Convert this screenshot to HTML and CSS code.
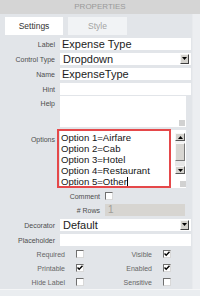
FILE: index.html
```html
<!DOCTYPE html>
<html>
<head>
<meta charset="utf-8">
<link rel="stylesheet" href="styles.css">
</head>
<body>
<div class="header">PROPERTIES</div>
<div class="content">
  <div class="main">
    <div class="tabs">
      <div class="tab active">Settings</div>
      <div class="tab">Style</div>
    </div>
    <div class="form">
      <div class="row r-first">
        <span class="lbl">Label</span>
        <div class="field">Expense Type</div>
      </div>
      <div class="row r-std">
        <span class="lbl">Control Type</span>
        <div class="field select"><span class="val">Dropdown</span><span class="ddbtn"><svg width="5" height="4" viewBox="0 0 5 4"><path d="M0 0H5L2.5 3Z" fill="#000"/></svg></span></div>
      </div>
      <div class="row r-std">
        <span class="lbl">Name</span>
        <div class="field">ExpenseType</div>
      </div>
      <div class="row r-std">
        <span class="lbl">Hint</span>
        <div class="field"></div>
      </div>
      <div class="row r-help">
        <span class="lbl lbl-top">Help</span>
        <div class="area help"><span class="grip"></span></div>
      </div>
      <div class="row r-options">
        <span class="lbl lbl-opt">Options</span>
        <div class="area options">
          <div class="opt-text">
            <div>Option 1=Airfare</div>
            <div>Option 2=Cab</div>
            <div>Option 3=Hotel</div>
            <div>Option 4=Restaurant</div>
            <div>Option 5=Other<span class="caret"></span></div>
          </div>
          <div class="sb-col">
            <div class="scrollbar">
              <div class="sb-btn"><svg width="5" height="3" viewBox="0 0 5 3"><path d="M0 3H5L2.5 0Z" fill="#000"/></svg></div>
              <div class="sb-thumb"></div>
              <div class="sb-track"></div>
              <div class="sb-btn"><svg width="5" height="3" viewBox="0 0 5 3"><path d="M0 0H5L2.5 3Z" fill="#000"/></svg></div>
            </div>
            <span class="grip grip-flow"></span>
          </div>
          <div class="highlight"></div>
        </div>
      </div>
      <div class="row2 r-comment">
        <span class="lbl">Comment</span>
        <span class="cb"></span>
      </div>
      <div class="row2 r-rows">
        <span class="lbl">&#35; Rows</span>
        <div class="field disabled">1</div>
      </div>
      <div class="row r-dec">
        <span class="lbl">Decorator</span>
        <div class="field select"><span class="val">Default</span><span class="ddbtn"><svg width="5" height="4" viewBox="0 0 5 4"><path d="M0 0H5L2.5 3Z" fill="#000"/></svg></span></div>
      </div>
      <div class="row r-std">
        <span class="lbl">Placeholder</span>
        <div class="field"></div>
      </div>
      <div class="checks">
        <span class="clbl">Required</span><span class="cb"></span>
        <span class="clbl">Visible</span><span class="cb checked"><svg width="6" height="6" viewBox="0 0 6 6"><path d="M0.5 2.5L2.2 4.3L5.5 0.8" fill="none" stroke="#000" stroke-width="1.4"/></svg></span>
        <span class="clbl">Printable</span><span class="cb checked"><svg width="6" height="6" viewBox="0 0 6 6"><path d="M0.5 2.5L2.2 4.3L5.5 0.8" fill="none" stroke="#000" stroke-width="1.4"/></svg></span>
        <span class="clbl">Enabled</span><span class="cb checked"><svg width="6" height="6" viewBox="0 0 6 6"><path d="M0.5 2.5L2.2 4.3L5.5 0.8" fill="none" stroke="#000" stroke-width="1.4"/></svg></span>
        <span class="clbl">Hide Label</span><span class="cb"></span>
        <span class="clbl">Sensitive</span><span class="cb"></span>
      </div>
    </div>
  </div>
  <div class="strip"></div>
</div>
</body>
</html>
```

FILE: styles.css
```css
html, body {
  margin: 0;
  padding: 0;
}
body {
  width: 200px;
  height: 296px;
  overflow: hidden;
  background: #eaedf0;
  font-family: "Liberation Sans", Arial, sans-serif;
}
.header {
  height: 14px;
  background: #d5d5d5;
  color: #9a9a9a;
  font-size: 8px;
  line-height: 14px;
  text-align: center;
}
.content {
  display: flex;
  height: 275px;
  border-bottom: 1px solid #f5f6f7;
}
.main {
  width: 192px;
  background: #e2e5e9;
}
.strip {
  flex: 1;
  background: #eceef1;
  border-left: 1px solid #e8eaed;
}
.tabs {
  display: flex;
  gap: 5px;
  padding: 3px 0 0 5px;
}
.tab {
  width: 59px;
  height: 18px;
  line-height: 18px;
  text-align: center;
  font-size: 8.5px;
  color: #a3a3a3;
  background: #f1f3f5;
}
.tab.active {
  width: 58px;
  background: #ffffff;
  color: #333;
}
.form {
  padding-top: 3px;
}
.row {
  display: grid;
  grid-template-columns: 55px 131px;
  column-gap: 5px;
  align-items: center;
}
.row2 {
  display: grid;
  grid-template-columns: 100px 80px;
  column-gap: 5px;
  align-items: center;
}
.lbl {
  font-size: 7px;
  color: #4d4d4d;
  text-align: right;
  white-space: nowrap;
}
.lbl-top {
  align-self: start;
  padding-top: 4px;
}
.lbl-opt {
  align-self: start;
  padding-top: 6px;
}
.r-std { margin-top: 3px; }
.r-help { margin-top: 1px; }
.r-options { margin-top: 3px; }
.r-comment { margin-top: 3px; height: 10px; }
.r-rows { margin-top: 3px; }
.r-dec { margin-top: 3px; }
.field {
  height: 12px;
  background: #fff;
  font-size: 11px;
  line-height: 12px;
  color: #1c1c1c;
  padding-left: 2px;
  box-sizing: border-box;
  overflow: hidden;
  white-space: nowrap;
}
.select {
  display: flex;
  align-items: center;
  padding-left: 3px;
}
.select .val {
  flex: 1;
}
.ddbtn {
  width: 9px;
  height: 10px;
  margin-right: 2px;
  box-sizing: border-box;
  background: #d4d2cd;
  border: 1px solid;
  border-color: #f4f4f4 #404040 #404040 #f4f4f4;
  display: flex;
  align-items: center;
  justify-content: center;
}
.disabled {
  background: #d7d5d1;
  color: #a09d98;
  font-size: 10px;
  padding-left: 3px;
}
.area {
  position: relative;
  background: #fff;
  width: 126px;
}
.help {
  height: 31px;
}
.grip {
  position: absolute;
  right: 1px;
  bottom: 1px;
  width: 6px;
  height: 6px;
  background-image: radial-gradient(circle, #b8b8b8 0.6px, transparent 0.9px);
  background-size: 2px 2px;
}
.grip-flow {
  position: static;
  display: block;
  margin: auto 0 1px auto;
}
.options {
  height: 58px;
  display: flex;
}
.opt-text {
  flex: 1;
  padding: 2px 0 0 1px;
  font-size: 9.6px;
  line-height: 11px;
  color: #141414;
  white-space: nowrap;
}
.caret {
  display: inline-block;
  width: 1px;
  height: 10px;
  background: #000;
  vertical-align: -2px;
}
.sb-col {
  width: 11px;
  display: flex;
  flex-direction: column;
  padding-top: 3px;
}
.scrollbar {
  width: 10px;
  height: 41px;
  display: flex;
  flex-direction: column;
  background: #f2f2f2;
}
.sb-btn {
  height: 8px;
  box-sizing: border-box;
  background: #d4d2cd;
  border: 1px solid;
  border-color: #f7f7f7 #555 #555 #f7f7f7;
  display: flex;
  align-items: center;
  justify-content: center;
}
.sb-thumb {
  height: 18px;
  margin-top: 2px;
  box-sizing: border-box;
  background: #d8d6d2;
  border: 1px solid;
  border-color: #f7f7f7 #7a7a7a #7a7a7a #f7f7f7;
}
.sb-track {
  flex: 1;
  background-image: radial-gradient(circle, #d0d0d0 0.5px, transparent 0.8px);
  background-size: 2px 2px;
}
.highlight {
  position: absolute;
  left: -3px;
  top: -1px;
  width: 114px;
  height: 59px;
  box-sizing: border-box;
  border: 2px solid #e5484a;
}
.cb {
  width: 8px;
  height: 8px;
  box-sizing: border-box;
  background: #fff;
  border: 1px solid;
  border-color: #6f6f6f #d8d8d8 #d8d8d8 #6f6f6f;
  display: flex;
  align-items: center;
  justify-content: center;
}
.checks {
  display: grid;
  grid-template-columns: 65px 8px 57px 8px;
  grid-auto-rows: 14px;
  column-gap: 11px;
  align-items: center;
  margin-top: 1px;
}
.clbl {
  font-size: 7px;
  color: #666;
  text-align: right;
  white-space: nowrap;
}
```
